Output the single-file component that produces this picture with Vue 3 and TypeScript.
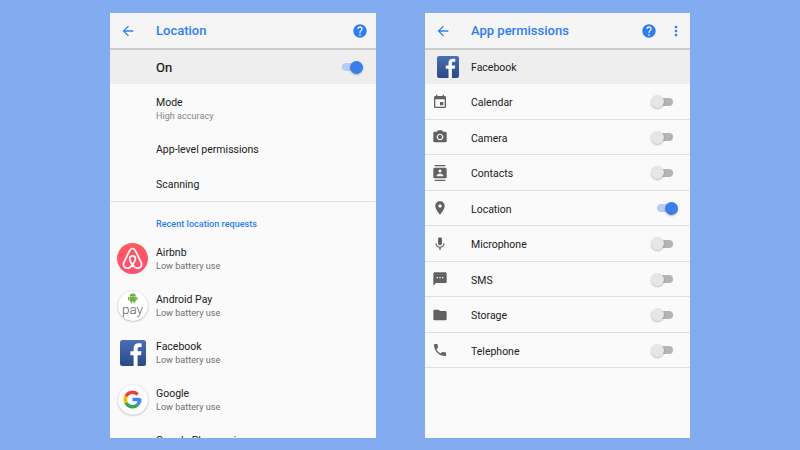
<template>
  <div class="page">
    <section class="phone">
      <header class="appbar">
        <svg class="back" viewBox="0 0 24 24"><path :d="icons.back" /></svg>
        <h1 class="title">Location</h1>
        <svg class="help" viewBox="0 0 24 24"><path :d="icons.help" /></svg>
      </header>
      <div class="master">
        <span class="master-label">On</span>
        <span class="toggle on master-toggle"></span>
      </div>
      <div class="setting tall">
        <span class="name">Mode</span>
        <span class="sub small">High accuracy</span>
      </div>
      <div class="setting"><span class="name">App-level permissions</span></div>
      <div class="setting"><span class="name">Scanning</span></div>
      <div class="divider"></div>
      <div class="section-title">Recent location requests</div>
      <div v-for="app in apps" :key="app.name" class="request">
        <div class="app-icon">
          <svg v-if="app.icon === 'airbnb'" viewBox="0 0 31 31" width="31" height="31">
            <defs>
              <linearGradient id="abnb" x1="0" y1="0" x2="0" y2="1">
                <stop offset="0" stop-color="#ff5a5f" />
                <stop offset="1" stop-color="#ff4f74" />
              </linearGradient>
            </defs>
            <circle cx="15.5" cy="15.5" r="15.5" fill="url(#abnb)" />
            <path
              d="M15.5 5.5c-1.5 0-2.4 1-3 2.3L6.8 19.6c-1.2 2.9.6 5.6 3.5 5.6 2.2 0 3.9-1.6 5.2-3.5 1.3 1.9 3 3.5 5.2 3.5 2.9 0 4.7-2.7 3.5-5.6L18.5 7.8c-.6-1.3-1.5-2.3-3-2.3zM15.5 21.7c-1.6-2-2.9-4.2-2.9-6 0-1.7 1.2-2.9 2.9-2.9s2.9 1.2 2.9 2.9c0 1.8-1.3 4-2.9 6z"
              fill="none"
              stroke="#fff"
              stroke-width="1.7"
              stroke-linejoin="round"
            />
          </svg>
          <div v-else-if="app.icon === 'pay'" class="round">
            <svg viewBox="0 0 14 14" width="11.5" height="11.5" class="droid">
              <path d="M3.2 5.4a3.8 3.6 0 0 1 7.6 0z" fill="#6fb03f" />
              <rect x="3.2" y="5.9" width="7.6" height="5.6" rx=".8" fill="#6fb03f" />
              <rect x="1.2" y="5.9" width="1.5" height="4.2" rx=".75" fill="#6fb03f" />
              <rect x="11.3" y="5.9" width="1.5" height="4.2" rx=".75" fill="#6fb03f" />
              <rect x="4.6" y="10.5" width="1.5" height="3.2" rx=".75" fill="#6fb03f" />
              <rect x="7.9" y="10.5" width="1.5" height="3.2" rx=".75" fill="#6fb03f" />
            </svg>
            <span class="pay-word">pay</span>
          </div>
          <svg v-else-if="app.icon === 'facebook'" viewBox="0 0 26 26" width="26" height="26">
            <use href="#fb-logo" />
          </svg>
          <div v-else-if="app.icon === 'google'" class="round">
            <svg viewBox="0 0 24 24" width="21" height="21">
              <path d="M20.2 12H12" fill="none" stroke="#4285f4" stroke-width="4" />
              <path d="M20.2 10.8A8.3 8.3 0 0 1 17.8 18" fill="none" stroke="#4285f4" stroke-width="4" />
              <path d="M17.8 18A8.3 8.3 0 0 1 4.6 15.7" fill="none" stroke="#34a853" stroke-width="4" />
              <path d="M4.6 15.7A8.3 8.3 0 0 1 4.6 8.3" fill="none" stroke="#fbbc05" stroke-width="4" />
              <path d="M4.6 8.3A8.3 8.3 0 0 1 17.9 6.2" fill="none" stroke="#ea4335" stroke-width="4" />
            </svg>
          </div>
          <span v-else class="play-dot"></span>
        </div>
        <div class="request-text">
          <span class="name">{{ app.name }}</span>
          <span class="sub">Low battery use</span>
        </div>
      </div>
    </section>

    <section class="phone narrow">
      <header class="appbar">
        <svg class="back" viewBox="0 0 24 24"><path :d="icons.back" /></svg>
        <h1 class="title">App permissions</h1>
        <svg class="help help-left" viewBox="0 0 24 24"><path :d="icons.help" /></svg>
        <svg class="more" viewBox="0 0 24 24"><path :d="icons.more" /></svg>
      </header>
      <div class="master app-head">
        <svg class="app-logo" viewBox="0 0 26 26" width="22" height="22">
          <defs>
            <linearGradient id="fbg" x1="0" y1="0" x2="0" y2="1">
              <stop offset="0" stop-color="#4a6fb5" />
              <stop offset="1" stop-color="#2b4887" />
            </linearGradient>
            <g id="fb-logo">
              <rect width="26" height="26" rx="2.5" fill="url(#fbg)" />
              <path
                d="M13.6 26V15.2H10.4v-4h3.2V8.4c0-3.4 2-5.2 5-5.2 1.4 0 2.7.1 3 .2v3.5h-2c-1.6 0-2 .8-2 1.9v2.4h3.9l-.5 4h-3.4V26z"
                fill="#fff"
              />
            </g>
          </defs>
          <use href="#fb-logo" />
        </svg>
        <span class="name head-name">Facebook</span>
      </div>
      <div v-for="perm in permissions" :key="perm.name" class="perm">
        <svg class="perm-icon" viewBox="0 0 24 24"><path :d="perm.path" /></svg>
        <span class="name">{{ perm.name }}</span>
        <span class="toggle" :class="{ on: perm.on }"></span>
      </div>
    </section>
  </div>
</template>

<script setup lang="ts">
const icons = {
  back: 'M20 11H7.83l5.59-5.59L12 4l-8 8 8 8 1.41-1.41L7.83 13H20v-2z',
  help: 'M12 2C6.48 2 2 6.48 2 12s4.48 10 10 10 10-4.48 10-10S17.52 2 12 2zm1 17h-2v-2h2v2zm2.07-7.75l-.9.92C13.45 12.9 13 13.5 13 15h-2v-.5c0-1.1.45-2.1 1.17-2.83l1.24-1.26c.37-.36.59-.86.59-1.41 0-1.1-.9-2-2-2s-2 .9-2 2H8c0-2.21 1.79-4 4-4s4 1.79 4 4c0 .88-.36 1.68-.93 2.25z',
  more: 'M12 8c1.1 0 2-.9 2-2s-.9-2-2-2-2 .9-2 2 .9 2 2 2zm0 2c-1.1 0-2 .9-2 2s.9 2 2 2 2-.9 2-2-.9-2-2-2zm0 6c-1.1 0-2 .9-2 2s.9 2 2 2 2-.9 2-2-.9-2-2-2z',
}

const apps = [
  { name: 'Airbnb', icon: 'airbnb' },
  { name: 'Android Pay', icon: 'pay' },
  { name: 'Facebook', icon: 'facebook' },
  { name: 'Google', icon: 'google' },
  { name: 'Google Play services', icon: 'play' },
]

const permissions = [
  { name: 'Calendar', on: false, path: 'M17 12h-5v5h5v-5zM16 1v2H8V1H6v2H5c-1.11 0-1.99.9-1.99 2L3 19c0 1.1.89 2 2 2h14c1.1 0 2-.9 2-2V5c0-1.1-.9-2-2-2h-1V1h-2zm3 18H5V8h14v11z' },
  { name: 'Camera', on: false, path: 'M9 2L7.17 4H4c-1.1 0-2 .9-2 2v12c0 1.1.9 2 2 2h16c1.1 0 2-.9 2-2V6c0-1.1-.9-2-2-2h-3.17L15 2H9zm3 15c-2.76 0-5-2.24-5-5s2.24-5 5-5 5 2.24 5 5-2.24 5-5 5zm0-8.2a3.2 3.2 0 1 0 0 6.4 3.2 3.2 0 0 0 0-6.4z' },
  { name: 'Contacts', on: false, path: 'M20 0H4v2h16V0zM4 24h16v-2H4v2zM20 4H4c-1.1 0-2 .9-2 2v12c0 1.1.9 2 2 2h16c1.1 0 2-.9 2-2V6c0-1.1-.9-2-2-2zm-8 2.75c1.24 0 2.25 1.01 2.25 2.25s-1.01 2.25-2.25 2.25S9.75 10.24 9.75 9 10.76 6.75 12 6.75zM17 17H7v-1.5c0-1.67 3.33-2.5 5-2.5s5 .83 5 2.5V17z' },
  { name: 'Location', on: true, path: 'M12 2C8.13 2 5 5.13 5 9c0 5.25 7 13 7 13s7-7.75 7-13c0-3.87-3.13-7-7-7zm0 9.5c-1.38 0-2.5-1.12-2.5-2.5s1.12-2.5 2.5-2.5 2.5 1.12 2.5 2.5-1.12 2.5-2.5 2.5z' },
  { name: 'Microphone', on: false, path: 'M12 14c1.66 0 2.99-1.34 2.99-3L15 5c0-1.66-1.34-3-3-3S9 3.34 9 5v6c0 1.66 1.34 3 3 3zm5.3-3c0 3-2.54 5.1-5.3 5.1S6.7 14 6.7 11H5c0 3.41 2.72 6.23 6 6.72V21h2v-3.28c3.28-.48 6-3.3 6-6.72h-1.7z' },
  { name: 'SMS', on: false, path: 'M20 2H4c-1.1 0-1.99.9-1.99 2L2 22l4-4h14c1.1 0 2-.9 2-2V4c0-1.1-.9-2-2-2zM9 11H7V9h2v2zm4 0h-2V9h2v2zm4 0h-2V9h2v2z' },
  { name: 'Storage', on: false, path: 'M10 4H4c-1.1 0-1.99.9-1.99 2L2 18c0 1.1.9 2 2 2h16c1.1 0 2-.9 2-2V8c0-1.1-.9-2-2-2h-8l-2-2z' },
  { name: 'Telephone', on: false, path: 'M6.62 10.79c1.44 2.83 3.76 5.14 6.59 6.59l2.2-2.2c.27-.27.67-.36 1.02-.24 1.12.37 2.33.57 3.57.57.55 0 1 .45 1 1V20c0 .55-.45 1-1 1-9.39 0-17-7.61-17-17 0-.55.45-1 1-1h3.5c.55 0 1 .45 1 1 0 1.25.2 2.45.57 3.57.11.35.03.74-.25 1.02l-2.2 2.2z' },
]
</script>

<style scoped>
.page {
  width: 800px;
  height: 450px;
  box-sizing: border-box;
  padding: 13px 0 0 110px;
  display: flex;
  gap: 49px;
  background: #82abf0;
  font-family: Roboto, "Liberation Sans", sans-serif;
  overflow: hidden;
}
.phone {
  width: 266px;
  height: 425px;
  background: #fafafa;
  overflow: hidden;
  flex: none;
}
.phone.narrow {
  width: 265px;
}
.appbar {
  height: 37px;
  box-sizing: border-box;
  background: #f5f5f5;
  border-bottom: 2px solid #cccccc;
  display: flex;
  align-items: center;
  padding: 0 8px 0 10px;
}
.back {
  width: 16px;
  height: 16px;
  fill: #2f7df6;
}
.title {
  margin: 0 0 0 20px;
  flex: 1;
  font-size: 13px;
  font-weight: 500;
  color: #2f7df6;
}
.help {
  width: 16px;
  height: 16px;
  fill: #2f7df6;
}
.help-left {
  margin-right: 11px;
}
.more {
  width: 16px;
  height: 16px;
  margin-right: -2px;
  fill: #2f7df6;
}
.master {
  height: 34px;
  background: #eeeeee;
  display: flex;
  align-items: center;
  justify-content: space-between;
  padding: 0 13px 0 46px;
}
.master-label {
  font-size: 13px;
  color: #111111;
  -webkit-text-stroke: 0.2px #111111;
}
.app-head {
  justify-content: flex-start;
  padding-left: 12px;
}
.app-logo {
  flex: none;
}
.head-name {
  margin: 2px 0 0 12px;
  font-size: 12.8px;
}
.setting {
  height: 35px;
  box-sizing: border-box;
  padding: 3px 0 0 46px;
  display: flex;
  flex-direction: column;
  justify-content: center;
}
.setting.tall {
  height: 47px;
}
.name {
  font-size: 10.5px;
  line-height: 14px;
  color: #212121;
}
.sub {
  font-size: 9.1px;
  line-height: 12px;
  color: #707070;
}
.sub.small {
  color: #858585;
}
.divider {
  height: 1px;
  background: #e0e0e0;
}
.section-title {
  height: 33px;
  box-sizing: border-box;
  padding: 16px 0 0 46px;
  font-size: 9.1px;
  line-height: 12px;
  font-weight: 500;
  color: #2f7df6;
}
.request {
  height: 47px;
  display: flex;
  align-items: center;
  padding-left: 7px;
}
.app-icon {
  width: 31px;
  height: 31px;
  margin-right: 8px;
  flex: none;
  display: flex;
  align-items: center;
  justify-content: center;
  position: relative;
}
.round {
  width: 30px;
  height: 30px;
  border-radius: 50%;
  background: #fff;
  box-shadow: 0 0.5px 2px rgba(0, 0, 0, 0.35);
  display: flex;
  flex-direction: column;
  align-items: center;
  justify-content: center;
}
.droid {
  margin-top: -1px;
}
.pay-word {
  font-size: 13.5px;
  font-weight: 300;
  line-height: 11px;
  color: #616161;
  padding-bottom: 3px;
}
.play-dot {
  position: absolute;
  top: 8px;
  left: 12px;
  width: 6px;
  height: 6px;
  border-radius: 50%;
  background: #0ee06c;
}
.request-text {
  display: flex;
  flex-direction: column;
}
.perm {
  height: 35.5px;
  box-sizing: border-box;
  border-bottom: 1px solid #e0e0e0;
  display: flex;
  align-items: center;
  padding: 1px 17px 0 7px;
}
.perm-icon {
  width: 16px;
  height: 16px;
  fill: #616161;
  flex: none;
  margin-right: 23px;
}
.perm .name {
  flex: 1;
  padding-top: 3px;
}
.toggle {
  position: relative;
  width: 21px;
  height: 8px;
  border-radius: 4px;
  background: #b4b4b4;
  flex: none;
}
.toggle::after {
  content: "";
  position: absolute;
  top: -2.5px;
  left: -1px;
  width: 13px;
  height: 13px;
  border-radius: 50%;
  background: #e6e6e6;
  box-shadow: 0 1px 2px rgba(0, 0, 0, 0.25);
}
.toggle.on {
  background: #b5cdf7;
  margin-right: -5px;
}
.toggle.on::after {
  left: auto;
  right: 0;
  background: #3b7eea;
}
.toggle.on.master-toggle {
  margin-right: 0;
}
</style>
